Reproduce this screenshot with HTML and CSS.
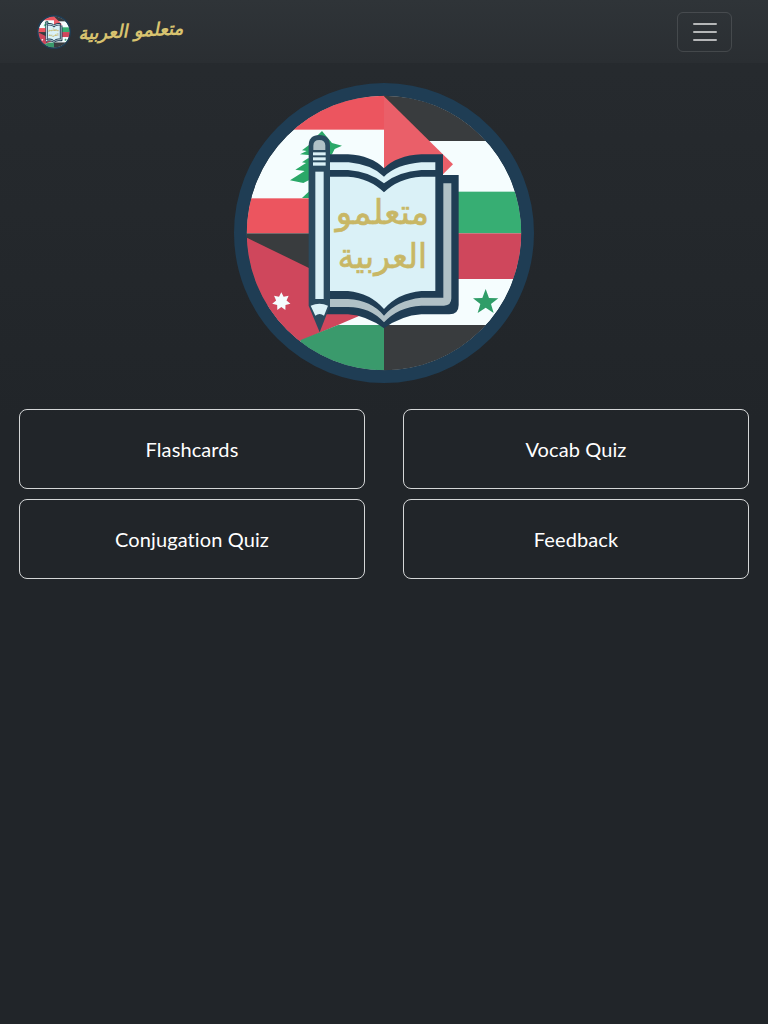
FILE: index.html
```html
<!DOCTYPE html>
<html lang="en">
<head>
  <meta charset="utf-8">
  <title>Arabic Learners</title>
  <link rel="stylesheet" href="styles.css">
</head>
<body>
  <svg class="defs" width="0" height="0" aria-hidden="true">
    <defs>
      <clipPath id="inner">
        <circle cx="478" cy="474" r="412"/>
      </clipPath>
      <symbol id="logo" viewBox="28 24 900 900">
        <g clip-path="url(#inner)">
          <rect class="white" x="40" y="40" width="880" height="880"/>
          <!-- lebanon -->
          <rect class="red" x="40" y="40" width="438" height="124"/>
          <rect class="red" x="40" y="370" width="438" height="105"/>
          <path class="cedar" d="M292 168L310 190 322 204 352 212 330 222 322 238 300 250H250L232 262 244 264 212 284 240 288 196 316 236 324 252 316V350L232 369H330V240H250L226 238 246 228 232 226 256 208 270 190z"/>
          <!-- palestine -->
          <rect class="dark" x="478" y="40" width="442" height="158"/>
          <rect class="white" x="478" y="198" width="442" height="152"/>
          <rect class="green" x="478" y="350" width="442" height="125"/>
          <path class="red-light" d="M478 64L685 268 478 475z"/>
          <!-- syria -->
          <rect class="crimson" x="478" y="475" width="442" height="137"/>
          <rect class="white" x="478" y="612" width="442" height="138"/>
          <rect class="dark" x="478" y="750" width="442" height="170"/>
          <path class="star-green" d="M783 642l10 27 28 1-22 17 8 27-24-16-24 16 8-27-22-17 28-1z"/>
          <!-- jordan -->
          <rect class="dark" x="40" y="475" width="438" height="215"/>
          <rect class="white" x="228" y="640" width="250" height="110"/>
          <path class="crimson" d="M40 475L480 690 200 810H40z"/>
          <path class="green-dark" d="M478 750H340L228 795l-20 125H478z"/>
          <path class="white" d="M170 652L176.900 665.600 191.900 662.500 185.600 676.400 197.300 686.200 182.500 690 182.100 705.200 170 696 157.900 705.200 157.500 690 142.700 686.200 154.400 676.400 148.100 662.500 163.100 665.600z"/>
        </g>
        <circle class="ring" cx="478" cy="474" r="431"/>
        <!-- book -->
        <path class="navy" d="M300 238H370Q440 242 478 280 516 242 590 238H655V300H702V690Q702 718 674 718H590Q530 722 478 760 426 722 370 718H300z"/>
        <path class="slate" d="M316 672H370Q440 676 478 722 516 676 590 668H656V325H680V670Q680 692 658 692H590Q520 696 478 742 436 696 370 696H316z"/>
        <path class="page" d="M316 262H372Q440 268 478 305 516 268 590 262H632V285H590Q520 290 478 325 436 290 370 285H316z"/>
        <path class="page" d="M316 305H370Q436 310 478 352 520 310 590 305H632V648H590Q520 654 478 702 436 654 370 648H316z"/>
        <text class="book-text" x="473" y="446" textLength="280" lengthAdjust="spacingAndGlyphs">متعلمو</text>
        <text class="book-text" x="473" y="578" textLength="268" lengthAdjust="spacingAndGlyphs">العربية</text>
        <!-- pencil -->
        <path class="pencil-line" d="M252 212Q252 180 284 180 316 180 316 212V692L285 772 252 692z"/>
        <path class="slate" d="M266 225V212Q266 195 284 195 302 195 302 212V225z"/>
        <rect class="page" x="265" y="232" width="38" height="9"/>
        <rect class="page" x="265" y="247" width="38" height="9"/>
        <rect class="page" x="265" y="262" width="38" height="10"/>
        <rect class="page" x="272" y="290" width="25" height="382"/>
        <path class="page" d="M258 692Q285 680 310 692L298 722Q285 712 272 722z"/>
      </symbol>
    </defs>
  </svg>

  <nav class="navbar">
    <a class="brand" href="#">
      <svg class="brand-logo"><use href="#logo"/></svg>
      <span class="brand-name" lang="ar" dir="rtl">متعلمو العربية</span>
    </a>
    <button class="toggler" type="button" aria-label="Toggle navigation">
      <svg width="30" height="30" viewBox="0 0 30 30">
        <path d="M4 7h22M4 15h22M4 23h22"/>
      </svg>
    </button>
  </nav>

  <main class="main">
    <svg class="hero-logo" role="img" aria-label="Arabic Learners logo"><use href="#logo"/></svg>
    <div class="menu">
      <a class="menu-btn" href="#">Flashcards</a>
      <a class="menu-btn" href="#">Vocab Quiz</a>
      <a class="menu-btn" href="#">Conjugation Quiz</a>
      <a class="menu-btn" href="#">Feedback</a>
    </div>
  </main>
</body>
</html>
```

FILE: styles.css
```css
html { height: 100%; }
body { margin: 0; min-height: 100%; background: linear-gradient(180deg, #272b2f 0, #212529 420px); font-family: Lato, "Open Sans", sans-serif; color: #fff; }
.defs { display: block; height: 0; }

.navbar { height: 63px; display: flex; align-items: center; justify-content: space-between; padding: 0 36px 0 37px; background: linear-gradient(180deg, #2f3438, #2a2e32); box-sizing: border-box; }
.brand { display: flex; align-items: center; gap: 8px; text-decoration: none; margin-top: 1px; }
.brand-logo { width: 34px; height: 34px; display: block; }
.brand-name { font-family: "DejaVu Sans", sans-serif; font-size: 18px; font-style: italic; font-weight: bold; color: #d8c36f; width: 104px; margin-bottom: 4px; white-space: nowrap; transform: rotate(-3deg); }
.toggler { width: 55px; height: 40px; padding: 0; display: flex; align-items: center; justify-content: center; background: transparent; border: 1px solid rgba(255,255,255,0.12); border-radius: 6px; }
.toggler path { stroke: rgba(255,255,255,0.65); stroke-width: 2; stroke-linecap: round; fill: none; }

.main { padding: 20px 19px 0; }
.hero-logo { width: 300px; height: 300px; display: block; margin: 0 auto 26px; }
.menu { display: grid; grid-template-columns: 1fr 1fr; column-gap: 38px; row-gap: 10px; }
.menu-btn { height: 80px; display: flex; align-items: center; justify-content: center; box-sizing: border-box; border: 1px solid #d4d6d7; border-radius: 8px; color: #fff; font-size: 20px; font-variant-ligatures: none; letter-spacing: 0.1px; text-decoration: none; }

.white { fill: #f5fdfe; }
.red { fill: #ec555f; }
.red-light { fill: #ea5f69; }
.crimson { fill: #cf475c; }
.dark { fill: #393c3e; }
.green { fill: #37ae73; }
.green-dark { fill: #3a9a6c; }
.cedar { fill: #2aa868; }
.star-green { fill: #2f9d68; }
.ring { fill: none; stroke: #1f3d54; stroke-width: 38; }
.navy { fill: #1f3d54; }
.slate { fill: #b0c1c6; }
.page { fill: #daf1f7; }
.pencil-line { fill: #2a4a5f; }
.book-text { fill: #c8b765; stroke: #c8b765; stroke-width: 2; font-family: "DejaVu Sans", sans-serif; font-size: 104px; text-anchor: middle; direction: rtl; }
```
